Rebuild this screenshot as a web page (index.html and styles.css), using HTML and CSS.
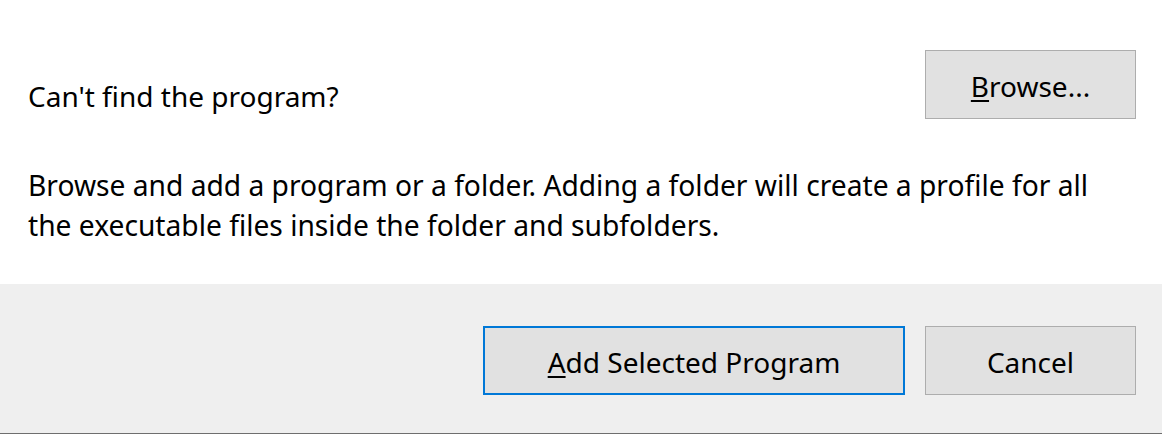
FILE: index.html
```html
<!DOCTYPE html>
<html>
<head>
<meta charset="utf-8">
<link rel="stylesheet" href="styles.css">
</head>
<body>
<div class="dialog">
  <section class="top">
    <div class="find-row">
      <span class="label">Can't find the program?</span>
      <button class="btn browse"><u>B</u>rowse...</button>
    </div>
    <p class="desc">Browse and add a program or a folder. Adding a folder will create a profile for all<br>the executable files inside the folder and subfolders.</p>
  </section>
  <footer class="bottom">
    <button class="btn add default"><u>A</u>dd Selected Program</button>
    <button class="btn cancel">Cancel</button>
  </footer>
</div>
</body>
</html>
```
FILE: styles.css
```css
html, body {
  margin: 0;
  padding: 0;
  background: #ffffff;
}
.dialog {
  width: 1162px;
  height: 434px;
  display: flex;
  flex-direction: column;
  font-family: "Noto Sans", "Open Sans", sans-serif;
  color: #000;
}
.top {
  height: 284px;
  box-sizing: border-box;
  padding: 50px 26px 0 28px;
  background: #fff;
}
.find-row {
  display: flex;
  justify-content: space-between;
  align-items: flex-start;
}
.label {
  font-size: 28px;
  line-height: 40px;
  margin-top: 26px;
}
.desc {
  margin: 46px 0 0 0;
  font-size: 28.2px;
  line-height: 40px;
  white-space: nowrap;
}
.btn {
  font-family: inherit;
  font-size: 28px;
  color: #000;
  background: #e1e1e1;
  border: 1px solid #adadad;
  box-sizing: border-box;
  height: 69px;
  padding: 3px 0 0 0;
  margin: 0;
}
.btn u {
  text-decoration-thickness: 2px;
  text-underline-offset: 3px;
}
.browse, .cancel {
  width: 211px;
}
.bottom {
  flex: 1;
  background: #efefef;
  border-bottom: 1px solid #6e6e6e;
  display: flex;
  justify-content: flex-end;
  align-items: flex-start;
  gap: 20px;
  padding: 42px 26px 0 0;
}
.add {
  width: 422px;
}
.default {
  border: 2px solid #0078d7;
}
```
